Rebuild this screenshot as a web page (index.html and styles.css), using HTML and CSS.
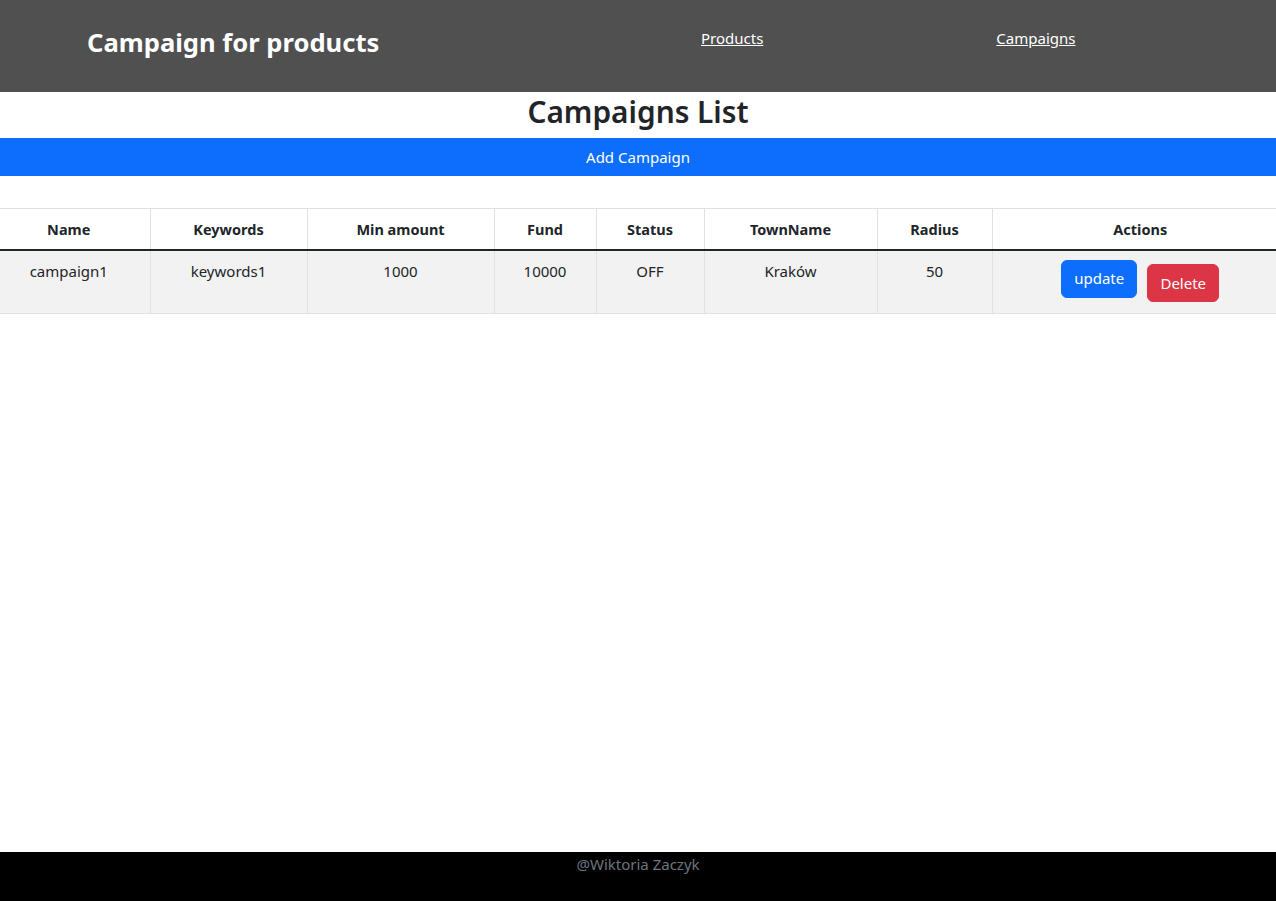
FILE: index.html
```html
<!DOCTYPE html>
<html lang="en">
<head>
<meta charset="utf-8">
<title>Campaign for products</title>
<link rel="stylesheet" href="styles.css">
</head>
<body>
<div class="page">
  <header class="topbar">
    <h3 class="brand">Campaign for products</h3>
    <nav class="nav">
      <a href="#" class="nav-link nav-products">Products</a>
      <a href="#" class="nav-link nav-campaigns">Campaigns</a>
    </nav>
  </header>
  <main class="content">
    <h2 class="page-title">Campaigns List</h2>
    <button class="btn btn-add">Add Campaign</button>
    <div class="table-wrap">
      <table class="table">
        <colgroup>
          <col style="width:162px">
          <col style="width:157px">
          <col style="width:187px">
          <col style="width:102px">
          <col style="width:108px">
          <col style="width:173px">
          <col style="width:115px">
          <col style="width:296px">
        </colgroup>
        <thead>
          <tr>
            <th>Name</th>
            <th>Keywords</th>
            <th>Min amount</th>
            <th>Fund</th>
            <th>Status</th>
            <th>TownName</th>
            <th>Radius</th>
            <th>Actions</th>
          </tr>
        </thead>
        <tbody>
          <tr>
            <td>campaign1</td>
            <td>keywords1</td>
            <td>1000</td>
            <td>10000</td>
            <td>OFF</td>
            <td>Kraków</td>
            <td>50</td>
            <td class="actions">
              <div class="action-group">
                <button class="btn btn-update">update</button>
                <button class="btn btn-delete">Delete</button>
              </div>
            </td>
          </tr>
        </tbody>
      </table>
    </div>
  </main>
  <footer class="footer">@Wiktoria Zaczyk</footer>
</div>
</body>
</html>
```

FILE: styles.css
```css
* { box-sizing: border-box; }
html, body { margin: 0; padding: 0; }
body {
  font-family: "Noto Sans", "Open Sans", sans-serif;
  font-size: 15px;
  line-height: 24px;
  color: #212529;
  background: #fff;
  overflow-x: hidden;
}
.page {
  min-height: 100vh;
  display: flex;
  flex-direction: column;
}
.topbar {
  height: 92px;
  background: #505050;
  display: flex;
  align-items: flex-start;
}
.brand {
  margin: 26px 0 0 87px;
  width: 500px;
  font-size: 25.6px;
  font-weight: 700;
  color: #fff;
  line-height: 34px;
}
.nav {
  display: flex;
  padding-top: 26px;
}
.nav-link {
  color: #fff;
  font-size: 15px;
  text-decoration: underline;
}
.nav-products { margin-left: 114px; }
.nav-campaigns { margin-left: 233px; }
.content {
  flex: 1;
  display: flex;
  flex-direction: column;
}
.page-title {
  margin: 0 0 7px;
  text-align: center;
  font-size: 29.8px;
  font-weight: 600;
  line-height: 39px;
}
.btn {
  font-family: inherit;
  font-size: 15px;
  line-height: 24px;
  border: 1px solid transparent;
  padding: 6px 12px;
  border-radius: 6px;
  color: #fff;
  cursor: pointer;
}
.btn-add {
  width: 100%;
  border-radius: 0;
  background: #0d6efd;
  border-color: #0d6efd;
  margin-bottom: 32px;
}
.table-wrap {
  margin: 0 -12px;
}
.table {
  width: 100%;
  border-collapse: collapse;
  table-layout: fixed;
  text-align: center;
}
.table th, .table td {
  padding: 8px;
  vertical-align: top;
  border-left: 1px solid #dee2e6;
}
.table th:first-child, .table td:first-child { border-left: 0; }
.table thead tr {
  border-top: 1px solid #dee2e6;
  border-bottom: 2px solid #212529;
}
.table th {
  font-weight: 700;
  font-size: 14.5px;
  height: 41px;
}
.table tbody tr {
  background: #f2f2f2;
  border-bottom: 1px solid #dee2e6;
}
.table td { height: 63px; }
.actions { padding-top: 9px !important; }
.action-group {
  display: flex;
  justify-content: center;
  align-items: flex-start;
  gap: 10px;
}
.btn-update {
  width: 76px;
  height: 38px;
  padding: 5px 0 7px;
  background: #0d6efd;
  border-color: #0d6efd;
}
.btn-delete {
  width: 72px;
  height: 38px;
  padding: 6px 0;
  margin-top: 4px;
  background: #dc3545;
  border-color: #dc3545;
}
.footer {
  height: 49px;
  background: #000;
  color: #6c757d;
  text-align: center;
  font-size: 15px;
  line-height: 24px;
}
```
